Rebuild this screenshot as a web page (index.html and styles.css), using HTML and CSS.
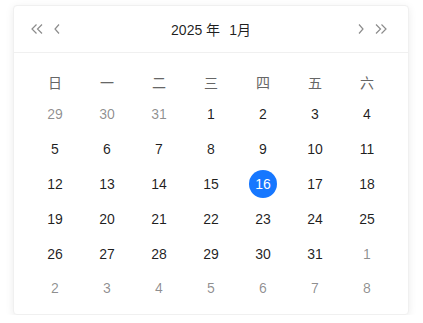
FILE: index.html
```html
<!DOCTYPE html>
<html lang="zh">

<head>
    <meta charset="UTF-8">
    <meta name="viewport" content="width=device-width, initial-scale=1.0">
    <title>日历</title>
    <link rel="stylesheet" href="styles.css">
</head>

<body>
    <div class="calendar">
        <div class="cal-header">
            <div class="nav">
                <button class="nav-btn" title="上一年">
                    <svg width="12" height="10" viewBox="0 0 12 10"><path d="M5.5 0.5 L1 5 L5.5 9.5 M11 0.5 L6.5 5 L11 9.5" /></svg>
                </button>
                <button class="nav-btn" title="上个月">
                    <svg width="6" height="10" viewBox="0 0 6 10"><path d="M5 0.5 L1 5 L5 9.5" /></svg>
                </button>
            </div>
            <div class="title">
                <span>2025 年</span>
                <span>1月</span>
            </div>
            <div class="nav">
                <button class="nav-btn" title="下个月">
                    <svg width="6" height="10" viewBox="0 0 6 10"><path d="M1 0.5 L5 5 L1 9.5" /></svg>
                </button>
                <button class="nav-btn" title="下一年">
                    <svg width="12" height="10" viewBox="0 0 12 10"><path d="M1 0.5 L5.5 5 L1 9.5 M6.5 0.5 L11 5 L6.5 9.5" /></svg>
                </button>
            </div>
        </div>

        <div class="cal-body">
            <div class="week">
                <span>日</span><span>一</span><span>二</span><span>三</span><span>四</span><span>五</span><span>六</span>
            </div>
            <div class="days" id="days"></div>
        </div>
    </div>

    <script>
        "use strict"

        // enero 2025 empieza en miércoles; 29, 30, 31 de diciembre delante
        let dias = [];
        for (let d = 29; d <= 31; d++) dias.push({ n: d, fuera: true });
        for (let d = 1; d <= 31; d++) dias.push({ n: d, fuera: false });
        let siguiente = 1;
        while (dias.length < 42) dias.push({ n: siguiente++, fuera: true });

        let contenedor = document.getElementById('days');
        dias.forEach(dia => {
            let celda = document.createElement('div');
            celda.className = 'day';
            if (dia.fuera) celda.classList.add('other');
            let num = document.createElement('span');
            num.innerText = dia.n;
            if (!dia.fuera && dia.n === 16) celda.classList.add('selected');
            celda.appendChild(num);
            contenedor.appendChild(celda);
        });
    </script>
</body>

</html>
```

FILE: styles.css
```css
* {
    box-sizing: border-box;
    margin: 0;
    padding: 0;
}

body {
    background-color: #ffffff;
    font-family: 'Liberation Sans', Arial, 'Noto Sans CJK SC', sans-serif;
    font-size: 14px;
    color: rgba(0, 0, 0, 0.88);
    padding: 5px 14px 0 13px;
}

.calendar {
    width: 396px;
    height: 310px;
    background-color: #fff;
    border: 1px solid #f0f0f0;
    border-radius: 4px;
    box-shadow: 0 2px 8px rgba(0, 0, 0, 0.08);
}

.cal-header {
    height: 47px;
    display: flex;
    align-items: center;
    justify-content: space-between;
    padding: 0 21px 0 17px;
    border-bottom: 1px solid #f0f0f0;
}

.nav {
    display: flex;
    align-items: center;
    gap: 11px;
}

.nav-btn {
    border: none;
    background: none;
    display: flex;
    align-items: center;
    justify-content: center;
    height: 20px;
    cursor: pointer;
}

.nav-btn svg path {
    fill: none;
    stroke: #8c8c8c;
    stroke-width: 1.2;
}

.title {
    display: flex;
    gap: 9px;
    margin-left: 4px;
}

.cal-body {
    padding: 14px 15px 0;
}

.week,
.days {
    display: grid;
    grid-template-columns: repeat(7, 52px);
}

.days {
    grid-auto-rows: 34.8px;
}

.week span {
    height: 30px;
    display: flex;
    align-items: center;
    justify-content: center;
    color: #666;
}

.day {
    display: flex;
    align-items: center;
    justify-content: center;
}

.day span {
    width: 28px;
    height: 28px;
    border-radius: 50%;
    display: flex;
    align-items: center;
    justify-content: center;
}

.day.other {
    color: rgba(0, 0, 0, 0.45);
}

.day.selected span {
    background-color: #1677ff;
    color: #fff;
}
```
